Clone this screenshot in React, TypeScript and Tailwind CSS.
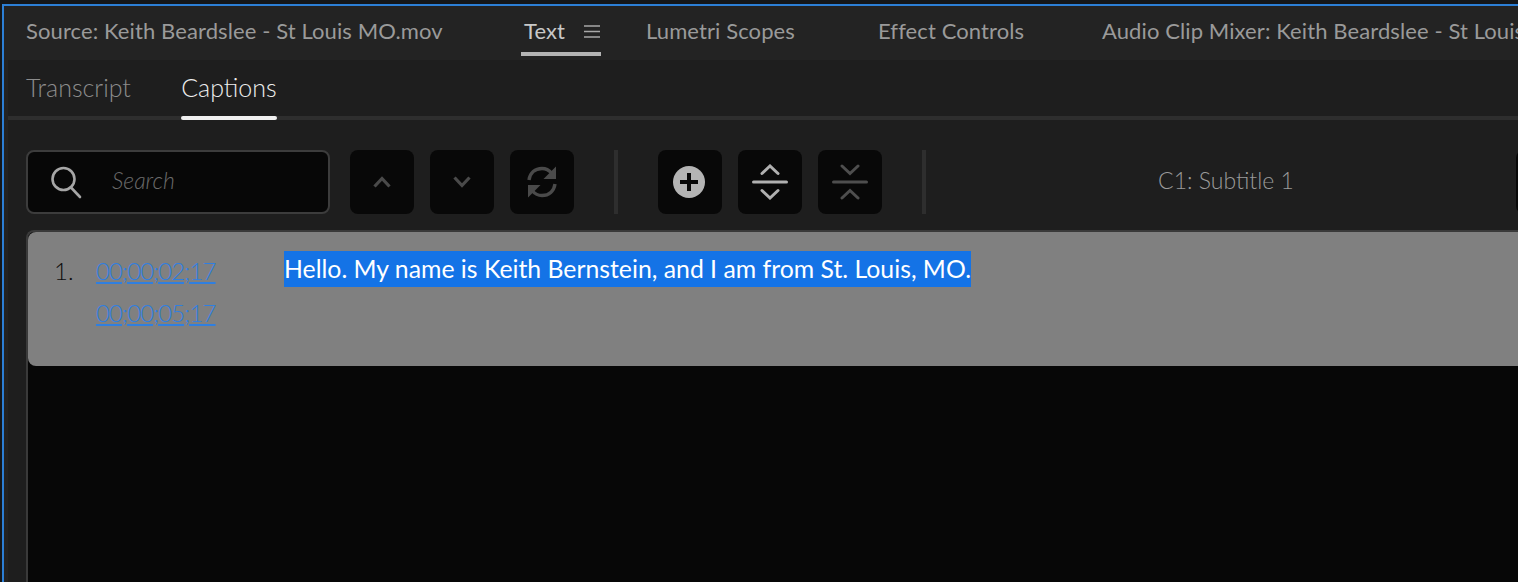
const font = { fontFamily: '"Lato", "Noto Sans", sans-serif' };

function Btn({ children }: { children: React.ReactNode }) {
  return <div className="flex h-16 w-16 shrink-0 items-center justify-center rounded-lg bg-[#080808]">{children}</div>;
}
function Sep() {
  return <div className="h-16 w-1 shrink-0 bg-[#2e2e2e]" />;
}

export default function App() {
  return (
    <div className="h-[582px] w-[1518px] overflow-hidden bg-[#14171a] pl-0.5 pt-1" style={font}>
      <div className="flex h-[578px] flex-col border-l-2 border-t-2 border-[#2c7fd6] bg-[#232323]">
        {/* panel tabs */}
        <div className="flex h-[54px] shrink-0 items-start whitespace-nowrap text-[22px] tracking-[0.1px] text-[#9a9a9a]">
          <span className="ml-[22px] mt-[10px] w-[495px] shrink-0 leading-[30px]">Source: Keith Beardslee - St Louis MO.mov</span>
          <div className="flex h-[50px] w-20 shrink-0 items-start border-b-4 border-[#b4b4b4] pl-[3px] pt-[10px] text-[#c8c8c8]">
            <span className="font-normal leading-[30px]">Text</span>
            <svg className="ml-[19px] mt-[8px]" width="16" height="15" viewBox="0 0 16 15" stroke="#a8a8a8" strokeWidth="1.6">
              <path d="M0 2h16M0 7.500h16M0 13h16" />
            </svg>
          </div>
          <span className="ml-[45px] mt-[10px] w-[232px] shrink-0 leading-[30px]">Lumetri Scopes</span>
          <span className="mt-[10px] w-[224px] shrink-0 leading-[30px]">Effect Controls</span>
          <span className="mt-[10px] leading-[30px]">Audio Clip Mixer: Keith Beardslee - St Louis MO.mov</span>
        </div>
        <div className="ml-1 flex min-h-0 flex-1 flex-col bg-[#1e1e1e]">
          {/* sub tabs */}
          <div className="flex h-[60px] shrink-0 items-stretch border-b-4 border-[#2e2e2e] text-[25px] font-light">
            <div className="ml-[18px] pt-[11px] leading-[32px] text-[#8c8c8c]">Transcript</div>
            <div className="relative ml-[50px] w-[96px] pt-[11px] text-center leading-[32px] text-[#ededed]">
              Captions
              <div className="absolute -bottom-1 left-0 h-1 w-full rounded-sm bg-[#f0f0f0]" />
            </div>
          </div>
          {/* toolbar */}
          <div className="ml-[18px] mt-[30px] flex h-16 shrink-0 items-center">
            <div className="flex h-16 w-[304px] shrink-0 items-center rounded-lg border-2 border-[#3c3c3c] bg-[#070707]">
              <svg className="ml-[22px]" width="32" height="34" viewBox="0 0 32 34" fill="none" stroke="#a6a6a6" strokeWidth="2.6" strokeLinecap="round">
                <circle cx="13.500" cy="14" r="11" />
                <path d="M21 22.500l9 9.500" />
              </svg>
              <span className="-mt-1 ml-[30px] text-[23px] font-light italic text-[#6a6a6a]">Search</span>
            </div>
            <div className="ml-5 flex gap-4">
              <Btn>
                <svg width="18" height="12" viewBox="0 0 18 12" fill="none" stroke="#4a4a4a" strokeWidth="3.2"><path d="M1.500 10.500L9 2.500l7.500 8" /></svg>
              </Btn>
              <Btn>
                <svg width="18" height="12" viewBox="0 0 18 12" fill="none" stroke="#4a4a4a" strokeWidth="3.2"><path d="M1.500 1.500L9 9.500l7.500-8" /></svg>
              </Btn>
              <Btn>
                <svg width="32" height="34" viewBox="0 0 32 34" fill="none">
                  <path d="M3 15C4 8 9 3.500 16 3.500c4 0 7 1.500 9.500 4.500" stroke="#4a4a4a" strokeWidth="3.4" />
                  <path d="M29 19c-1 7-6 11.500-13 11.500-4 0-7-1.500-9.500-4.500" stroke="#4a4a4a" strokeWidth="3.4" />
                  <path d="M30 1.500V14H17.500z" fill="#4a4a4a" />
                  <path d="M2 32.500V20h12.500z" fill="#4a4a4a" />
                </svg>
              </Btn>
            </div>
            <div className="ml-10"><Sep /></div>
            <div className="ml-10 flex gap-4">
              <Btn>
                <svg className="-ml-0.5" width="32" height="32" viewBox="0 0 32 32">
                  <circle cx="16" cy="16" r="16" fill="#b4b4b4" />
                  <path d="M16 7v18M7 16h18" stroke="#080808" strokeWidth="4" />
                </svg>
              </Btn>
              <Btn>
                <svg width="36" height="36" viewBox="0 0 36 36" fill="none" stroke="#b0b0b0" strokeWidth="3" strokeLinecap="round">
                  <path d="M10 9.500L18 2l8 7.500" />
                  <path d="M1.500 18h33" />
                  <path d="M10 26.500l8 7.500 8-7.500" />
                </svg>
              </Btn>
              <Btn>
                <svg width="36" height="36" viewBox="0 0 36 36" fill="none" stroke="#4e4e4e" strokeWidth="3" strokeLinecap="round">
                  <path d="M10 2l8 7.500L26 2" />
                  <path d="M1.500 18h33" />
                  <path d="M10 34l8-7.500 8 7.500" />
                </svg>
              </Btn>
            </div>
            <div className="ml-10"><Sep /></div>
            <div className="-mt-1 w-[590px] shrink-0 pl-[10px] text-center text-[23px] font-light text-[#9a9a9a]">C1: Subtitle 1</div>
            <div className="h-16 w-4 shrink-0 rounded-l-lg bg-[#080808]" />
          </div>
          {/* list */}
          <div className="ml-[18px] mt-4 min-h-0 flex-1 rounded-tl-lg border-l-2 border-t-2 border-[#3a3a3a] bg-[#070707]">
            <div className="flex h-[134px] items-start rounded-l-lg bg-[#808080] pl-[26px] pt-5">
              <span className="w-[42px] text-[24px] font-light leading-[38px] text-[#0d0d0d]">1.</span>
              <div className="flex w-[188px] flex-col gap-1 text-[24px] font-light leading-[38px] tracking-[-0.9px] text-[#2f7fe0]">
                <span className="underline decoration-2 underline-offset-2">00;00;02;17</span>
                <span className="underline decoration-2 underline-offset-2">00;00;05;17</span>
              </div>
              <span className="-mt-px whitespace-nowrap bg-[#1473e6] text-[24.8px] leading-[36px] text-white">Hello. My name is Keith Bernstein, and I am from St. Louis, MO.</span>
            </div>
          </div>
        </div>
      </div>
    </div>
  );
}
